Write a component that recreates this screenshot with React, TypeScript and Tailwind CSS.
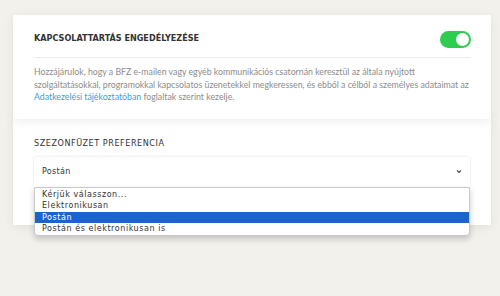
import React from 'react';

const options = ['Kérjük válasszon...', 'Elektronikusan', 'Postán', 'Postán és elektronikusan is'];

export default function App() {
  const selected = 'Postán';

  return (
    <div className="w-[500px] h-[296px] bg-[#f2f1ec] overflow-hidden relative font-['Lato',sans-serif]">
      <div className="ml-[13px] mr-[9px] pt-[15px]">
        {/* Consent card */}
        <section className="bg-white shadow-[0_2px_10px_rgba(0,0,0,0.08)] pl-[21px] pr-[20px] pt-[15px] pb-[15px] relative z-10">
          <div className="flex items-center justify-between h-[18px]">
            <h2 className="font-['DejaVu_Sans_Condensed','DejaVu_Sans',sans-serif] font-bold text-[9px] tracking-normal text-[#333] uppercase">
              Kapcsolattartás engedélyezése
            </h2>
            {/* Toggle */}
            <div className="w-[31px] h-[17px] rounded-full bg-[#2ecc4f] flex items-center justify-end px-[2px]">
              <div className="w-[13px] h-[13px] rounded-full bg-white" />
            </div>
          </div>
          <div className="h-px bg-[#ececec] mt-[9px]" />
          <p className="mt-[8px] text-[8.75px] leading-[12.5px] text-[#8c8c8c]">
            Hozzájárulok, hogy a BFZ e-mailen vagy egyéb kommunikációs csatornán keresztül az általa nyújtott
            szolgáltatásokkal, programokkal kapcsolatos üzenetekkel megkeressen, és ebből a célból a személyes adataimat az{' '}
            <span className="text-[#3a9fdc]">Adatkezelési tájékoztatóban</span> foglaltak szerint kezelje.
          </p>
        </section>

        {/* Booklet preference card */}
        <section className="bg-white shadow-[0_2px_10px_rgba(0,0,0,0.08)] pl-[21px] pr-[21px] pt-[19px] h-[106px] relative">
          <h2 className="font-['DejaVu_Sans_Condensed','DejaVu_Sans',sans-serif] text-[9px] leading-[11px] tracking-[0.06em] text-[#333] uppercase">
            Szezonfüzet preferencia
          </h2>
          <div className="relative mt-[8px]">
            <div className="h-[30px] bg-white rounded-t-[3px] shadow-[0_0_3px_rgba(0,0,0,0.12)] flex items-center justify-between pl-[8px] pr-[8px]">
              <span className="font-['DejaVu_Sans',sans-serif] text-[8px] tracking-[0.04em] text-[#333]">{selected}</span>
              <svg width="6" height="5" viewBox="0 0 6 5" fill="none">
                <path d="M1 1.5 L3 3.5 L5 1.5" stroke="#555" strokeWidth="1.2" />
              </svg>
            </div>
            {/* Open option list */}
            <ul className="absolute left-0 right-0 top-[30px] bg-white border border-[#c9c9c9] rounded-b-[4px] shadow-[0_3px_6px_rgba(0,0,0,0.2)] pt-[1px] z-20">
              {options.map((o) => (
                <li
                  key={o}
                  className={
                    o === selected
                      ? "h-[11.5px] leading-[11.5px] pl-[7px] bg-[#1c63d0] text-white font-['DejaVu_Sans',sans-serif] text-[8px] tracking-[0.07em]"
                      : "h-[11.5px] leading-[11.5px] pl-[7px] text-[#333] font-['DejaVu_Sans',sans-serif] text-[8px] tracking-[0.07em]"
                  }
                >
                  {o}
                </li>
              ))}
            </ul>
          </div>
        </section>
      </div>
    </div>
  );
}
